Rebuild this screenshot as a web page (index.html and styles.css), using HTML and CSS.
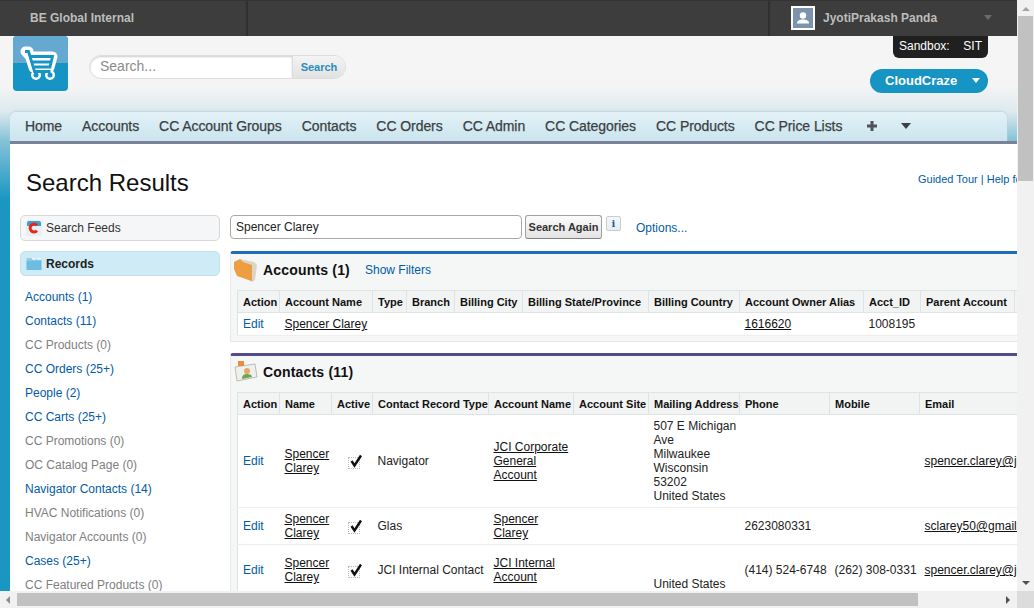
FILE: index.html
```html
<!DOCTYPE html>
<html lang="en">
<head>
<meta charset="utf-8">
<title>Search Results</title>
<link rel="stylesheet" href="styles.css">
</head>
<body>
<div class="window">
  <div class="viewport">
    <div class="page">
      <header class="topbar">
        <div class="org">BE Global Internal</div>
        <div class="topfill"></div>
        <div class="user">
          <span class="avatar"><svg viewBox="0 0 20 20" width="20" height="20"><rect width="20" height="20" fill="#7c93ad"/><circle cx="10" cy="7.500" r="3.200" fill="#fff"/><path d="M4 15.500c0-3 2.500-4 6-4s6 1 6 4z" fill="#fff"/></svg></span>
          <span class="username">JyotiPrakash Panda</span>
          <span class="usercaret"></span>
        </div>
      </header>
      <section class="masthead">
        <div class="logo">
          <svg viewBox="0 0 55 55" width="55" height="55">
            <rect width="55" height="55" rx="4" fill="#1694c4"/>
            <path d="M0 27V4a4 4 0 0 1 4-4h47a4 4 0 0 1 4 4v23z" fill="#65a9d3"/>
            <path d="M12.500 15.500h3l5 16h16l3-11H17z" fill="#fff" stroke="#fff" stroke-width="10" stroke-linejoin="round"/>
            <circle cx="23" cy="39" r="5" fill="#fff"/><circle cx="37" cy="39" r="5" fill="#fff"/>
            <path d="M12 15.500h3.500l6 20h16M17 20.500h22.500l-2.500 10.500H20.500M19 26h19.500" fill="none" stroke="#1694c4" stroke-width="2.800"/>
            <circle cx="23" cy="39" r="2.500" fill="#1694c4"/><circle cx="37" cy="39" r="2.500" fill="#1694c4"/>
          </svg>
        </div>
        <form class="searchbox">
          <span class="searchinput">Search...</span>
          <span class="searchbtn">Search</span>
        </form>
        <div class="mastright">
          <div class="sandbox"><span>Sandbox:</span><span>SIT</span></div>
          <div class="appmenu"><span>CloudCraze</span><i></i></div>
        </div>
      </section>
      <nav class="tabs">
        <a>Home</a><a>Accounts</a><a>CC Account Groups</a><a>Contacts</a><a>CC Orders</a><a>CC Admin</a><a>CC Categories</a><a>CC Products</a><a>CC Price Lists</a>
        <a class="plus"><svg viewBox="0 0 10 10" width="10" height="10"><path d="M3.500 0h3v3.500H10v3H6.500V10h-3V6.500H0v-3h3.500z" fill="#4f5357"/></svg></a>
        <a class="more"></a>
      </nav>
      <div class="content">
        <div class="titlerow">
          <h1>Search Results</h1>
          <div class="help"><a>Guided Tour</a> | <a>Help for this Page</a></div>
        </div>
        <div class="columns">
          <aside class="side">
            <div class="feeds">
              <svg viewBox="0 0 16 16" width="16" height="16"><rect width="16" height="16" rx="2" fill="#e8eef2"/><path d="M1 3a2 2 0 0 1 2-2h10a2 2 0 0 1 2 2v3H1z" fill="#3c9fd0"/><path d="M11 5.200a4 4 0 1 0 0 5.600" fill="none" stroke="#e4281f" stroke-width="3"/></svg>
              <span>Search Feeds</span>
            </div>
            <div class="records">
              <svg viewBox="0 0 16 14" width="16" height="13"><path d="M0 1h5l1 1h10v12H0z" fill="#8fcdea"/><path d="M6 1h4v2H6zM11 1h5v2h-5z" fill="#eef6fa"/><path d="M0 4h16v10H0z" fill="#6dbde3"/></svg>
              <span>Records</span>
            </div>
            <ul class="objects">
              <li><a>Accounts (1)</a></li>
              <li><a>Contacts (11)</a></li>
              <li class="off">CC Products (0)</li>
              <li><a>CC Orders (25+)</a></li>
              <li><a>People (2)</a></li>
              <li><a>CC Carts (25+)</a></li>
              <li class="off">CC Promotions (0)</li>
              <li class="off">OC Catalog Page (0)</li>
              <li><a>Navigator Contacts (14)</a></li>
              <li class="off">HVAC Notifications (0)</li>
              <li class="off">Navigator Accounts (0)</li>
              <li><a>Cases (25+)</a></li>
              <li class="off">CC Featured Products (0)</li>
            </ul>
          </aside>
          <main class="results">
            <div class="again">
              <span class="againinput">Spencer Clarey</span>
              <span class="againbtn">Search Again</span>
              <span class="info">i</span>
              <a class="options">Options...</a>
            </div>
            <section class="block blue">
              <div class="blockhead">
                <svg class="blockicon" viewBox="0 0 24 24" width="24" height="24"><path d="M6 1l14 3 3 3-2 15-3 2-12-6z" fill="#d9d6c8"/><path d="M0 4l6-3 3 3 9 3v16L3 18 0 11z" fill="#ef9d42"/></svg>
                <h2>Accounts (1)</h2>
                <a class="filters">Show Filters</a>
              </div>
              <table class="grid acct">
                <thead><tr>
                  <th class="a1">Action</th><th class="a2">Account Name</th><th class="a3">Type</th><th class="a4">Branch</th><th class="a5">Billing City</th><th class="a6">Billing State/Province</th><th class="a7">Billing Country</th><th class="a8">Account Owner Alias</th><th class="a9">Acct_ID</th><th class="a10">Parent Account</th><th class="a11"></th>
                </tr></thead>
                <tbody><tr>
                  <td><a class="edit">Edit</a></td><td><a class="rec">Spencer Clarey</a></td><td></td><td></td><td></td><td></td><td></td><td><a class="rec">1616620</a></td><td>1008195</td><td></td><td></td>
                </tr></tbody>
              </table>
            </section>
            <section class="block purple">
              <div class="blockhead">
                <svg class="blockicon" viewBox="0 0 24 24" width="24" height="24"><path d="M1 7l20-3 2 13-20 4z" fill="#eef0ee" stroke="#bdbdb5"/><path d="M4 1h6v5H4z" fill="#ef8a3c"/><circle cx="13" cy="11" r="3" fill="#e9a56c"/><path d="M8 19c0-4 2-5 5-5s5 1 5 3z" fill="#6ea84f"/></svg>
                <h2>Contacts (11)</h2>
              </div>
              <table class="grid cont">
                <thead><tr>
                  <th class="c1">Action</th><th class="c2">Name</th><th class="c3">Active</th><th class="c4">Contact Record Type</th><th class="c5">Account Name</th><th class="c6">Account Site</th><th class="c7">Mailing Address</th><th class="c8">Phone</th><th class="c9">Mobile</th><th class="c10">Email</th>
                </tr></thead>
                <tbody>
                  <tr>
                    <td><a class="edit">Edit</a></td><td><a class="rec">Spencer Clarey</a></td>
                    <td class="chk"><span class="tick"><svg viewBox="0 0 14 14" width="14" height="14"><path d="M2.500 7l3 4.500L12 1.500" fill="none" stroke="#111" stroke-width="2.400"/></svg></span></td>
                    <td>Navigator</td><td><a class="rec">JCI Corporate General Account</a></td><td></td>
                    <td>507 E Michigan Ave<br>Milwaukee<br>Wisconsin<br>53202<br>United States</td>
                    <td></td><td></td><td class="clip"><a class="rec">spencer.clarey@jci.com</a></td>
                  </tr>
                  <tr>
                    <td><a class="edit">Edit</a></td><td><a class="rec">Spencer Clarey</a></td>
                    <td class="chk"><span class="tick"><svg viewBox="0 0 14 14" width="14" height="14"><path d="M2.500 7l3 4.500L12 1.500" fill="none" stroke="#111" stroke-width="2.400"/></svg></span></td>
                    <td>Glas</td><td><a class="rec">Spencer Clarey</a></td><td></td><td></td>
                    <td>2623080331</td><td></td><td class="clip"><a class="rec">sclarey50@gmail.com</a></td>
                  </tr>
                  <tr>
                    <td><a class="edit">Edit</a></td><td><a class="rec">Spencer Clarey</a></td>
                    <td class="chk"><span class="tick"><svg viewBox="0 0 14 14" width="14" height="14"><path d="M2.500 7l3 4.500L12 1.500" fill="none" stroke="#111" stroke-width="2.400"/></svg></span></td>
                    <td>JCI Internal Contact</td><td><a class="rec">JCI Internal Account</a></td><td></td>
                    <td><br><br>United States</td>
                    <td>(414) 524-6748</td><td>(262) 308-0331</td><td class="clip"><a class="rec">spencer.clarey@jci.com</a></td>
                  </tr>
                </tbody>
              </table>
            </section>
          </main>
        </div>
      </div>
    </div>
  </div>
  <div class="vbar"><i class="up"></i><b></b><i class="down"></i></div>
  <div class="hbar"><i class="left"></i><b></b><i class="right"></i></div>
  <div class="corner"></div>
</div>
</body>
</html>
```
FILE: styles.css
```css
* { box-sizing: border-box; }
html, body { margin: 0; height: 100%; overflow: hidden; }
body { font-family: "Liberation Sans", Arial, sans-serif; font-size: 12px; color: #222; }
a { color: #015ba7; }
.window { display: grid; grid-template-columns: 1017px 17px; grid-template-rows: 591px 17px; width: 1034px; height: 608px; }
.viewport { overflow: hidden; }
.page { width: 1400px; height: 591px; background: linear-gradient(#f5f5f5 85px, #dce9ee 112px, #86c3d9 140px, #1a96c0 200px); }

.topbar { display: flex; height: 36px; background: #3c3d3c; color: #bdbdbd; font-weight: bold; border-top: 1px solid #333; width: 1017px; }
.org { width: 248px; padding: 10px 0 0 30px; border-right: 2px solid #303030; }
.topfill { width: 522px; border-right: 2px solid #303030; }
.user { display: flex; align-items: center; flex: 1; padding: 0 0 2px 21px; }
.avatar { width: 24px; height: 24px; border: 2px solid #fff; display: block; }
.avatar svg { display: block; }
.username { margin-left: 8px; }
.usercaret { margin-left: 47px; border: 4px solid transparent; border-top: 5px solid #6b6b6b; border-bottom: 0; width: 0; }

.masthead { display: flex; height: 76px; width: 1017px; padding-left: 13px; }
.logo { width: 55px; height: 55px; }
.logo svg { display: block; }
.searchbox { display: flex; margin: 19px 0 0 21px; height: 24px; width: 257px; border: 1px solid #dcdcdc; border-radius: 12px; overflow: hidden; background: #fff; }
.searchinput { width: 202px; padding: 2px 0 0 10px; font-size: 14px; color: #8b8b8b; box-shadow: inset 0 1px 2px #ccc; border-radius: 12px 0 0 12px; }
.searchbtn { flex: 1; background: linear-gradient(#f4f4f4, #e2e2e2); color: #2b8dbb; font-size: 11px; font-weight: bold; text-align: center; padding-top: 5px; border-left: 1px solid #ddd; }
.mastright { margin-left: auto; margin-right: 29px; width: 118px; display: flex; flex-direction: column; align-items: flex-end; }
.sandbox { display: flex; justify-content: space-between; width: 95px; height: 22px; padding: 3px 6px 0 6px; background: #202020; color: #fff; border-radius: 0 0 6px 6px; }
.appmenu { display: flex; align-items: center; margin-top: 11px; width: 118px; height: 24px; background: #1694c4; border-radius: 12px; color: #fff; font-size: 13px; font-weight: bold; padding: 0 0 1px 15px; }
.appmenu i { margin-left: 15px; border: 4px solid transparent; border-top: 5px solid #fff; border-bottom: 0; }

.tabs { display: flex; align-items: center; width: 997px; height: 29px; margin-left: 10px; padding: 0 0 2px 15px; gap: 20px; background: linear-gradient(#e3f1f7, #cbe5ee); border-radius: 6px 6px 0 0; box-shadow: 0 -1px 2px #bcd5df; font-size: 14px; letter-spacing: -.07px; -webkit-text-stroke: .25px; }
.tabs a { color: #3b3f44; white-space: nowrap; }
.tabs .plus { display: block; height: 10px; line-height: 0; margin-left: 5px; }
.tabs .more { display: block; margin-left: 4px; width: 0; border: 5px solid transparent; border-top: 6px solid #3b3f44; border-bottom: 0; }

.content { width: 1390px; margin-left: 10px; height: 450px; background: #fff; border-top: 3px solid #7a8299; overflow: hidden; }
.titlerow { display: flex; height: 71px; width: 1007px; padding: 25px 0 0 16px; overflow: hidden; }
h1 { margin: 0; font-size: 24px; font-weight: normal; color: #111; line-height: 28px; }
.help { margin-left: auto; padding-top: 4px; font-size: 11px; color: #015ba7; width: 99px; flex: none; white-space: nowrap; overflow: hidden; }

.columns { display: flex; }
.side { width: 200px; margin-left: 10px; flex: none; }
.feeds, .records { display: flex; align-items: center; gap: 4px; padding-left: 5px; border-radius: 5px; }
.feeds { height: 26px; background: #f5f6f8; border: 1px solid #d8d8d8; color: #333; }
.records { height: 25px; margin-top: 10px; background: #cfecf6; border: 1px solid #c5e0ea; font-weight: bold; color: #222; }
.objects { list-style: none; margin: 9px 0 0; padding: 0 0 0 5px; }
.objects li { height: 24px; line-height: 24px; white-space: nowrap; }
.objects li.off { color: #808080; }

.results { margin-left: 10px; width: 1150px; flex: none; }
.again { display: flex; align-items: flex-start; height: 36px; }
.againinput { display: block; width: 292px; height: 24px; border: 1px solid #a8a8a8; border-radius: 4px; padding: 4px 0 0 5px; color: #222; }
.againbtn { display: block; width: 77px; height: 24px; margin-left: 3px; border: 1px solid #a0a0a0; border-bottom-color: #7f7f7f; border-radius: 3px; background: linear-gradient(#fbfbfb, #e3e3e3); font-size: 11px; font-weight: bold; color: #333; text-align: center; padding-top: 5px; white-space: nowrap; }
.info { display: block; width: 15px; height: 15px; margin: 1px 0 0 4px; background: linear-gradient(#f6f6f6, #e3edf5); border: 1px solid #ccc; border-radius: 2px; font: bold 10px/13px "DejaVu Serif", serif; color: #1b5f9b; text-align: center; }
.options { margin: 6px 0 0 15px; }

.block { background: #f5f6f6; border: 1px solid #e8e8e8; border-top-width: 3px; border-radius: 3px 3px 0 0; padding: 0 0 0 6px; }
.block.blue { border-top-color: #1f6cb8; height: 91px; }
.block.purple { border-top-color: #544a8c; margin-top: 11px; }
.blockhead { display: flex; align-items: center; height: 36px; padding-bottom: 4px; }
.blockicon { margin-left: -3px; flex: none; }
h2 { margin: 0 0 0 5px; font-size: 14px; line-height: 18px; letter-spacing: .18px; color: #111; font-weight: bold; white-space: nowrap; }
.filters { margin-left: 15px; }

.grid { border-collapse: collapse; table-layout: fixed; background: #fff; font-size: 12px; }
.grid th { background: #f2f3f3; border: 1px solid #e0e3e5; font-size: 11px; color: #111; font-weight: bold; text-align: left; padding: 0 0 0 5px; height: 22px; white-space: nowrap; overflow: hidden; }
.grid td { border-top: 1px solid #ededed; border-bottom: 1px solid #ededed; padding: 4px 0 4px 5px; line-height: 14px; color: #222; vertical-align: middle; }
.grid tr > :first-child { border-left: 1px solid #e0e3e5; }
.edit { display: inline-block; }
.rec { color: #111; text-decoration: underline; }
.acct { width: 877px; }
.acct td { height: 23px; white-space: nowrap; }
.a1 { width: 42px; } .a2 { width: 93px; } .a3 { width: 34px; } .a4 { width: 48px; } .a5 { width: 68px; } .a6 { width: 126px; } .a7 { width: 91px; } .a8 { width: 124px; } .a9 { width: 57px; } .a10 { width: 94px; } .a11 { width: 100px; }
.cont { width: 802px; }
.c1 { width: 42px; } .c2 { width: 52px; } .c3 { width: 41px; } .c4 { width: 116px; } .c5 { width: 85px; } .c6 { width: 75px; } .c7 { width: 91px; } .c8 { width: 90px; } .c9 { width: 90px; } .c10 { width: 120px; }
.grid td.chk { padding-left: 16px; }
.tick { display: block; width: 12px; height: 12px; margin-top: 3px; border: 1px dotted #bbb; }
.tick svg { display: block; margin: -4px 0 0 0; }
.clip { white-space: nowrap; }

.vbar { background: #f1f1f1; display: flex; flex-direction: column; align-items: center; }
.vbar b { display: block; width: 15px; height: 165px; background: #c1c1c1; }
.vbar i { display: block; width: 0; border: 4px solid transparent; }
.vbar .up { border-bottom: 4px solid #a3a3a3; border-top: 0; margin: 7px 0 5px; }
.vbar .down { border-top: 4px solid #505050; border-bottom: 0; margin-top: auto; margin-bottom: 6px; }
.hbar { background: #f1f1f1; display: flex; align-items: center; }
.hbar b { display: block; width: 901px; height: 13px; background: #c1c1c1; }
.hbar i { display: block; width: 0; border: 4px solid transparent; }
.hbar .left { margin: 0 7px 0 6px; border-right: 4px solid #8c8c8c; border-left: 0; }
.hbar .right { margin-left: auto; margin-right: 7px; border-left: 4px solid #505050; border-right: 0; }
.corner { background: #dcdcdc; }
```
